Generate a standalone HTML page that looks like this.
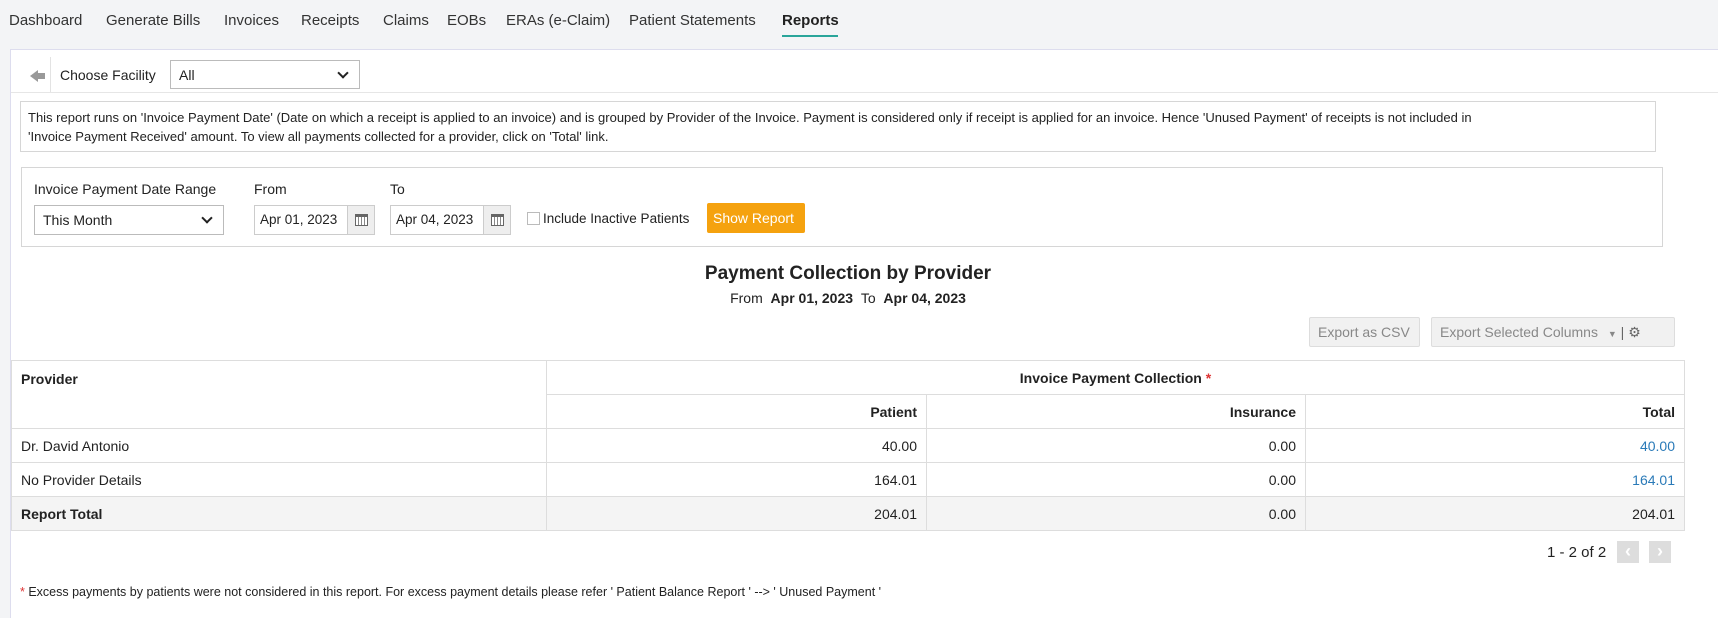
<!DOCTYPE html>
<html><head><meta charset="utf-8"><style>
*{box-sizing:border-box;margin:0;padding:0}
body{width:1718px;height:618px;overflow:hidden;background:#f3f4f6;font-family:"Liberation Sans",sans-serif;color:#222;font-size:14px;position:relative}
.a{position:absolute;white-space:nowrap}
.nav span{position:absolute;top:12px;font-size:15px;color:#333}
.main{left:10px;top:49px;width:1708px;height:569px;background:#fff;border-left:1px solid #dde;border-top:1px solid #dde}
.box{border:1px solid #d6d6d6;background:#fff}
.sel{border:1px solid #bbb;background:#fff;height:29px;font-size:14px;padding:6px 8px}
.sel:after{content:"";position:absolute;right:12px;top:8px;width:6px;height:6px;border-right:2px solid #222;border-bottom:2px solid #222;transform:rotate(45deg)}
.date{border:1px solid #ccc;height:30px;background:#fff;font-size:13.5px;padding:6px 5px}
.cal{position:absolute;right:0;top:0;width:27px;height:28px;background:#eee;border-left:1px solid #ccc}
.cal i{position:absolute;left:7px;top:8px;width:13px;height:12px;border:1px solid #666;border-top:3px solid #666;background:repeating-linear-gradient(90deg,#fff 0 2px,#888 2px 3px)}
table{border-collapse:collapse;position:absolute;left:11px;top:360px;width:1674px;font-size:14px}
td{border:1px solid #ddd;height:34px;padding:0 9px;text-align:right}
td.l{text-align:left}
.b{font-weight:bold}
.lnk{color:#2a7ab8}
.btn{border:1px solid #ddd;background:#f1f1f1;color:#888;font-size:14.5px;height:30px;border-radius:2px;padding:6px 8px}
</style></head><body>
<div class="nav">
<span style="left:9px">Dashboard</span>
<span style="left:106px">Generate Bills</span>
<span style="left:224px">Invoices</span>
<span style="left:301px">Receipts</span>
<span style="left:383px">Claims</span>
<span style="left:447px">EOBs</span>
<span style="left:506px">ERAs (e-Claim)</span>
<span style="left:629px">Patient Statements</span>
<span style="left:782px;font-weight:bold;color:#222">Reports</span>
<div class="a" style="left:782px;top:35px;width:56px;height:2px;background:#2aa59a"></div>
</div>
<div class="a main"></div>
<div class="a" style="left:11px;top:92px;width:1707px;height:1px;background:#e6e6e6"></div>
<div class="a" style="left:30px;top:70px;width:0;height:0;border-top:6px solid transparent;border-bottom:6px solid transparent;border-right:8px solid #999"></div>
<div class="a" style="left:37px;top:73px;width:8px;height:6px;background:#999"></div>
<div class="a" style="left:50px;top:57px;width:1px;height:35px;background:#e3e3e3"></div>
<div class="a" style="left:60px;top:67px;font-size:14px">Choose Facility</div>
<div class="a sel" style="left:170px;top:60px;width:190px">All</div>
<div class="a box" style="left:20px;top:101px;width:1636px;height:51px;padding:6px 7px;font-size:13px;line-height:19px;color:#222;white-space:normal">This report runs on 'Invoice Payment Date' (Date on which a receipt is applied to an invoice) and is grouped by Provider of the Invoice. Payment is considered only if receipt is applied for an invoice. Hence 'Unused Payment' of receipts is not included in<br>'Invoice Payment Received' amount. To view all payments collected for a provider, click on 'Total' link.</div>
<div class="a box" style="left:21px;top:167px;width:1642px;height:80px"></div>
<div class="a" style="left:34px;top:181px">Invoice Payment Date Range</div>
<div class="a" style="left:254px;top:181px">From</div>
<div class="a" style="left:390px;top:181px">To</div>
<div class="a sel" style="left:34px;top:205px;width:190px;height:30px">This Month</div>
<div class="a date" style="left:254px;top:205px;width:121px">Apr 01, 2023<div class="cal"><i></i></div></div>
<div class="a date" style="left:390px;top:205px;width:121px">Apr 04, 2023<div class="cal"><i></i></div></div>
<div class="a" style="left:527px;top:212px;width:13px;height:13px;border:1px solid #bbb"></div>
<div class="a" style="left:543px;top:211px;font-size:13.5px">Include Inactive Patients</div>
<div class="a" style="left:707px;top:203px;width:98px;height:30px;background:#f5a20f;color:#fff;font-size:14px;padding:7px 6px;border-radius:2px">Show Report</div>
<div class="a b" style="left:0;width:1696px;text-align:center;top:263px;font-size:19px">Payment Collection by Provider</div>
<div class="a" style="left:0;width:1696px;text-align:center;top:290px;font-size:14px">From &nbsp;<b>Apr 01, 2023</b> &nbsp;To &nbsp;<b>Apr 04, 2023</b></div>
<div class="a btn" style="left:1309px;top:317px;width:111px;font-size:14px">Export as CSV</div>
<div class="a btn" style="left:1431px;top:317px;width:244px;font-size:14px">Export Selected Columns <span style="font-size:9px;margin-left:6px">▼</span> <span style="color:#666">|</span> <span style="color:#666">⚙</span></div>
<table>
<tr><td class="b l" rowspan="2" style="width:535px;vertical-align:top;padding-top:10px">Provider</td><td class="b" colspan="3" style="text-align:center">Invoice Payment Collection <span style="color:#d33">*</span></td></tr>
<tr><td class="b" style="width:380px">Patient</td><td class="b" style="width:379px">Insurance</td><td class="b">Total</td></tr>
<tr><td class="l">Dr. David Antonio</td><td>40.00</td><td>0.00</td><td class="lnk">40.00</td></tr>
<tr><td class="l">No Provider Details</td><td>164.01</td><td>0.00</td><td class="lnk">164.01</td></tr>
<tr style="background:#f4f4f4"><td class="b l">Report Total</td><td>204.01</td><td>0.00</td><td>204.01</td></tr>
</table>
<div class="a" style="left:1547px;top:544px;font-size:15px">1 - 2 of 2</div>
<div class="a" style="left:1617px;top:541px;width:22px;height:22px;background:#ddd;color:#fff;text-align:center;line-height:21px;font-size:18px;font-weight:bold">‹</div>
<div class="a" style="left:1649px;top:541px;width:22px;height:22px;background:#ddd;color:#fff;text-align:center;line-height:21px;font-size:18px;font-weight:bold">›</div>
<div class="a" style="left:20px;top:585px;font-size:12.5px"><span style="color:#d33">*</span> Excess payments by patients were not considered in this report. For excess payment details please refer ' Patient Balance Report ' --&gt; ' Unused Payment '</div>
</body></html>
